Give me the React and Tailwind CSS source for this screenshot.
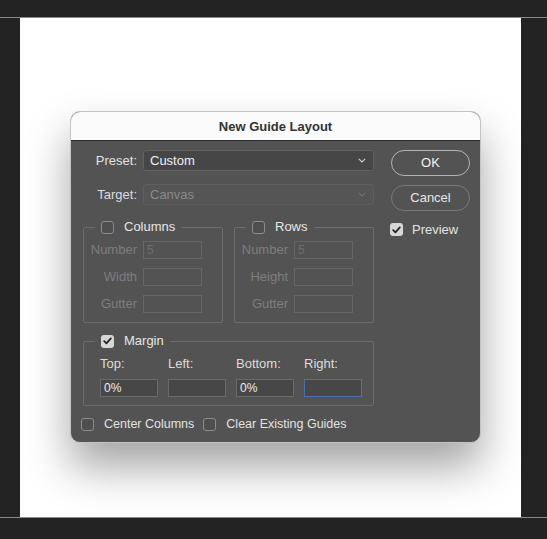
import React from "react";

const font = { fontFamily: '"Liberation Sans", Arial, sans-serif' };

function Check({ checked }) {
  if (checked) {
    return (
      <span className="flex h-[13px] w-[13px] shrink-0 items-center justify-center rounded-[3px] bg-[#d6d6d6]">
        <svg width="9" height="8" viewBox="0 0 9 8">
          <path d="M1.2 4.2 L3.4 6.4 L7.8 1.4" fill="none" stroke="#262626" strokeWidth="1.8" strokeLinecap="round" strokeLinejoin="round" />
        </svg>
      </span>
    );
  }
  return <span className="block h-[13px] w-[13px] shrink-0 rounded-[3px] border border-[#8c8c8c] bg-[#4e4e4e]" />;
}

function Field({ label, value }) {
  return (
    <div className="flex h-[17px] items-center">
      <span className="w-[53px] text-right text-[13px] leading-none text-[#7e7e7e]">{label}</span>
      <span className="ml-[6px] flex h-[18px] w-[59px] items-center border border-[#666666] bg-[#535353] pl-[3px] text-[12px] text-[#6e6e6e]">{value}</span>
    </div>
  );
}

function Group({ title, rows }) {
  return (
    <fieldset className="h-[104px] w-[140px] rounded-[2px] border border-[#6c6c6c] pl-[11px]">
      <legend className="flex items-center px-[6px]">
        <Check />
        <span className="ml-[10px] text-[13px] leading-[16px] text-[#e6e6e6]">{title}</span>
      </legend>
      <div className="-ml-[11px] mt-[6px] flex flex-col gap-[10px]">
        {rows.map((r) => (
          <Field key={r[0]} label={r[0]} value={r[1]} />
        ))}
      </div>
    </fieldset>
  );
}

function MarginInput({ value, focus }) {
  return (
    <span
      className={
        "flex h-[18px] w-[58px] items-center pl-[3px] text-[12px] text-[#ececec] " +
        (focus ? "border border-[#4a6fb3] bg-[#474747]" : "border border-[#6a6a6a] bg-[#474747]")
      }
    >
      {value}
    </span>
  );
}

export default function App() {
  return (
    <div className="flex h-[539px] w-[547px] flex-col overflow-hidden bg-[#232323]" style={font}>
      <div className="h-[17px] shrink-0" />
      <div className="h-px shrink-0 bg-[#5b9ea0]" />
      <div className="flex h-[499px] shrink-0">
        <div className="w-[20px] shrink-0" />
        <div className="h-full w-[501px] shrink-0 bg-white pl-[50px] pt-[93px]">
          <div className="flex h-[332px] w-[411px] flex-col overflow-hidden rounded-[10px] border border-[#c4c4c4] bg-[#535353] shadow-[0_24px_44px_rgba(0,0,0,0.36)]">
            <div className="flex h-[28px] shrink-0 items-center justify-center bg-[#fbfbfb] pt-[1px] text-[13px] font-bold text-[#333333]">
              New Guide Layout
            </div>
            <div className="h-px shrink-0 bg-[#2e2e2e]" />
            <div className="flex flex-1 pl-[12px] pt-[9px]">
              <div className="flex w-[291px] flex-col">
                <div className="flex h-[21px] items-center">
                  <span className="w-[54px] text-right text-[13px] text-[#e2e2e2]">Preset:</span>
                  <div className="ml-[6px] flex h-[21px] w-[231px] items-center justify-between rounded-[3px] border border-[#626262] bg-[#464646] pl-[6px] pr-[7px]">
                    <span className="text-[13px] text-[#f0f0f0]">Custom</span>
                    <svg width="8" height="5" viewBox="0 0 8 5">
                      <path d="M0.8 0.8 L4 4 L7.2 0.8" fill="none" stroke="#cfcfcf" strokeWidth="1.1" />
                    </svg>
                  </div>
                </div>
                <div className="mt-[13px] flex h-[21px] items-center">
                  <span className="w-[54px] text-right text-[13px] text-[#dcdcdc]">Target:</span>
                  <div className="ml-[6px] flex h-[21px] w-[231px] items-center justify-between rounded-[3px] border border-[#5f5f5f] bg-[#555555] pl-[6px] pr-[7px]">
                    <span className="text-[13px] text-[#8a8a8a]">Canvas</span>
                    <svg width="8" height="5" viewBox="0 0 8 5">
                      <path d="M0.8 0.8 L4 4 L7.2 0.8" fill="none" stroke="#707070" strokeWidth="1.1" />
                    </svg>
                  </div>
                </div>
                <div className="mt-[14px] flex gap-[11px]">
                  <Group title="Columns" rows={[["Number", "5"], ["Width", ""], ["Gutter", ""]]} />
                  <Group title="Rows" rows={[["Number", "5"], ["Height", ""], ["Gutter", ""]]} />
                </div>
                <fieldset className="mt-[10px] h-[73px] w-[291px] rounded-[2px] border border-[#6c6c6c] pl-[11px]">
                  <legend className="flex items-center px-[6px]">
                    <Check checked />
                    <span className="ml-[10px] text-[13px] leading-[16px] text-[#e6e6e6]">Margin</span>
                  </legend>
                  <div className="-ml-[11px] mt-[8px] flex gap-[10px] pl-[16px] text-[13px] leading-none text-[#dcdcdc]">
                    <span className="w-[58px]">Top:</span>
                    <span className="w-[58px]">Left:</span>
                    <span className="w-[58px]">Bottom:</span>
                    <span className="w-[58px]">Right:</span>
                  </div>
                  <div className="-ml-[11px] mt-[9px] flex gap-[10px] pl-[16px]">
                    <MarginInput value="0%" />
                    <MarginInput value="" />
                    <MarginInput value="0%" />
                    <MarginInput value="" focus />
                  </div>
                </fieldset>
                <div className="-ml-[2px] mt-[9px] flex items-center text-[12.5px] text-[#e2e2e2]">
                  <Check />
                  <span className="ml-[10px]">Center Columns</span>
                  <span className="ml-[9px]" />
                  <Check />
                  <span className="ml-[10px]">Clear Existing Guides</span>
                </div>
              </div>
              <div className="ml-[17px] flex flex-col">
                <div className="flex h-[26px] w-[79px] items-center justify-center rounded-full border border-[#b4b4b4] text-[13px] text-[#f2f2f2]">OK</div>
                <div className="mt-[9px] flex h-[26px] w-[79px] items-center justify-center rounded-full border border-[#7a7a7a] text-[13px] text-[#e6e6e6]">Cancel</div>
                <div className="-ml-[1px] mt-[9px] flex items-center">
                  <Check checked />
                  <span className="ml-[9px] text-[13px] text-[#e2e2e2]">Preview</span>
                </div>
              </div>
            </div>
          </div>
        </div>
        <div className="flex-1" />
      </div>
      <div className="h-px shrink-0 bg-[#5b9ea0]" />
      <div className="flex-1" />
    </div>
  );
}
